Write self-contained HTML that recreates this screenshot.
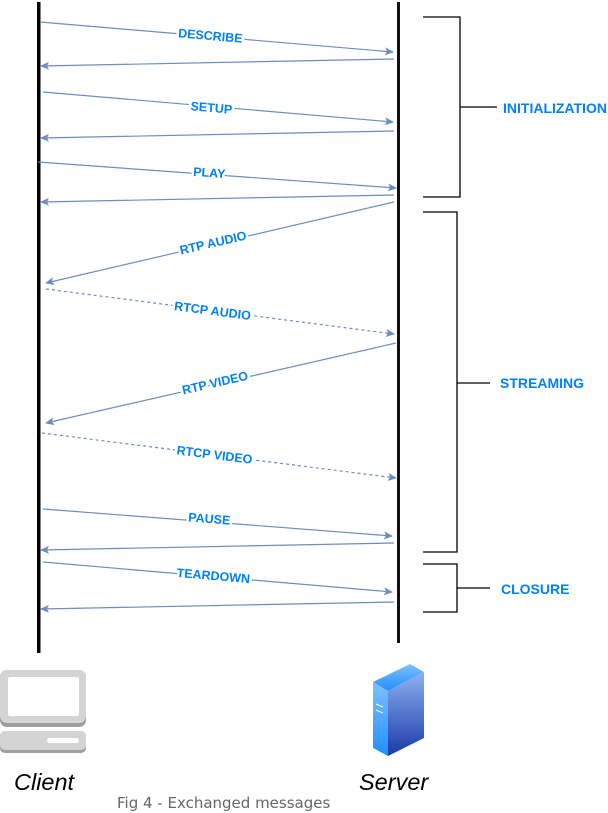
<!DOCTYPE html>
<html><head><style>
html,body{margin:0;padding:0;background:#fff;width:608px;height:813px;overflow:hidden}
svg{display:block}
.a{stroke:#6c8ebf;stroke-width:1.2;fill:none}
.d{stroke-dasharray:3 3}
.t{font-family:"Liberation Sans",sans-serif;font-weight:bold;font-size:12.5px;fill:#007fff;text-anchor:middle;stroke:#fff;stroke-width:5;paint-order:stroke}
.b{stroke:#000;stroke-width:1.3;fill:none}
.l{font-family:"Liberation Sans",sans-serif;font-weight:bold;font-size:14px;fill:#007fff}
</style></head><body>
<svg width="608" height="813" viewBox="0 0 608 813">
<defs>
<marker id="m" markerWidth="10" markerHeight="10" refX="8" refY="4" orient="auto" markerUnits="userSpaceOnUse"><path d="M0,0 L9,4 L0,8 L2,4 Z" fill="#6c8ebf"/></marker>
<linearGradient id="g1" x1="0" y1="0" x2="0" y2="1"><stop offset="0" stop-color="#80bfff"/><stop offset="1" stop-color="#1e90ff"/></linearGradient>
<linearGradient id="g2" x1="0" y1="0" x2="0" y2="1"><stop offset="0" stop-color="#8cb2f0"/><stop offset="1" stop-color="#1a3aa8"/></linearGradient>
</defs>
<rect x="37" y="2" width="3.5" height="651" fill="#000"/>
<rect x="397" y="2" width="3" height="641" fill="#111"/>

<g class="a">
<line x1="40" y1="22" x2="393" y2="52" marker-end="url(#m)"/>
<line x1="394" y1="59" x2="41" y2="66" marker-end="url(#m)"/>
<line x1="43" y1="92" x2="393" y2="122" marker-end="url(#m)"/>
<line x1="394" y1="131" x2="41" y2="138" marker-end="url(#m)"/>
<line x1="38" y1="162" x2="396" y2="188" marker-end="url(#m)"/>
<line x1="394" y1="195" x2="41" y2="202" marker-end="url(#m)"/>
<line x1="394" y1="202" x2="46" y2="283" marker-end="url(#m)"/>
<line class="d" x1="46" y1="289" x2="394" y2="334" marker-end="url(#m)"/>
<line x1="396" y1="343" x2="46" y2="423" marker-end="url(#m)"/>
<line class="d" x1="42" y1="433" x2="396" y2="478" marker-end="url(#m)"/>
<line x1="43" y1="509" x2="392" y2="536" marker-end="url(#m)"/>
<line x1="394" y1="543" x2="41" y2="550" marker-end="url(#m)"/>
<line x1="43" y1="562" x2="392" y2="592" marker-end="url(#m)"/>
<line x1="394" y1="602" x2="41" y2="609" marker-end="url(#m)"/>
</g>

<text class="t" transform="translate(210,40) rotate(4.9)">DESCRIBE</text>
<text class="t" transform="translate(211,112) rotate(4.9)">SETUP</text>
<text class="t" transform="translate(209,177) rotate(4.2)">PLAY</text>
<text class="t" transform="translate(214,247) rotate(-13)">RTP AUDIO</text>
<text class="t" transform="translate(212,315) rotate(7.4)">RTCP AUDIO</text>
<text class="t" transform="translate(216,387) rotate(-12.9)">RTP VIDEO</text>
<text class="t" transform="translate(214,459) rotate(7.2)">RTCP VIDEO</text>
<text class="t" transform="translate(209,523) rotate(4.4)">PAUSE</text>
<text class="t" transform="translate(213,580) rotate(4.9)">TEARDOWN</text>

<g class="b">
<polyline points="423,17 460,17 460,197 423,197"/>
<line x1="460" y1="107" x2="497" y2="107"/>
<polyline points="423,212 457,212 457,552 423,552"/>
<line x1="457" y1="383" x2="490" y2="383"/>
<polyline points="423,564 457,564 457,612 423,612"/>
<line x1="457" y1="588" x2="490" y2="588"/>
</g>
<text class="l" x="503" y="113">INITIALIZATION</text>
<text class="l" x="500" y="388">STREAMING</text>
<text class="l" x="501" y="594">CLOSURE</text>

<!-- client icon -->
<rect x="0" y="670" width="86" height="57" rx="7" fill="#9e9e9e"/>
<rect x="0" y="670" width="86" height="53" rx="7" fill="#d4d4d4"/>
<rect x="8" y="677" width="71" height="39" rx="2" fill="#fff"/>
<rect x="0" y="731" width="86" height="22" rx="5" fill="#9e9e9e"/>
<rect x="0" y="731" width="86" height="19" rx="5" fill="#d4d4d4"/>
<rect x="47" y="738" width="32" height="5" rx="2.5" fill="#fff"/>

<!-- server icon -->
<polygon points="373,682 410,664 424,672 388,691" fill="url(#g1)"/>
<polygon points="373,682 388,691 388,756 373,748" fill="url(#g1)"/>
<polygon points="388,691 424,672 424,738 388,756" fill="url(#g2)"/>
<line x1="376" y1="704" x2="383" y2="707" stroke="#fff" stroke-width="1"/>
<line x1="376" y1="710" x2="383" y2="713" stroke="#fff" stroke-width="1"/>

<text x="14" y="790" font-family="Liberation Sans,sans-serif" font-style="italic" font-size="23.5" fill="#000">Client</text>
<text x="359" y="790" font-family="Liberation Sans,sans-serif" font-style="italic" font-size="23.5" fill="#000">Server</text>
<text x="117" y="808" font-family="DejaVu Sans,sans-serif" font-size="15" fill="#666">Fig 4 - Exchanged messages</text>
</svg>
</body></html>
